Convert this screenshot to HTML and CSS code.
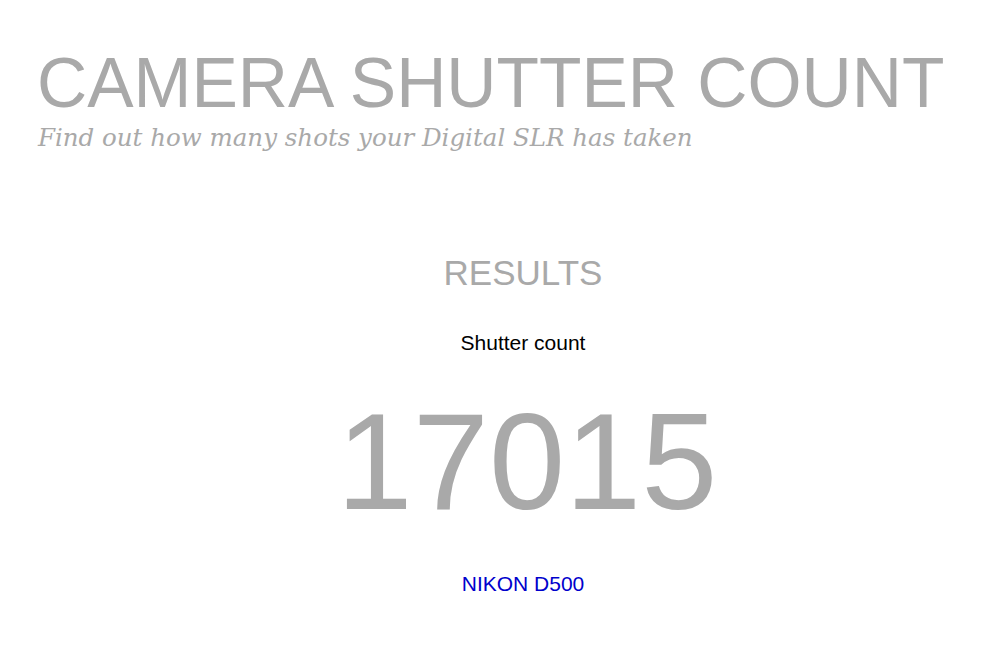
FILE: index.html
```html
<html>
	<head>
		<title>Camera Shutter Count</title>
		<link rel="stylesheet" href="styles.css">
	</head>
	<body>
		<div id='header'>
			<h1>CAMERA SHUTTER COUNT</h1>
			<p class='tagline'>Find out how many shots your Digital SLR has taken</p>
		</div>
		<div id='results'>
			<h2>RESULTS</h2>
			<p class='label'>Shutter count</p>
			<div class='count'>17015</div>
			<p class='model'>NIKON D500</p>
		</div>
	</body>
</html>
```

FILE: styles.css
```css
body{
	margin:0;
	background:#fff;
	font-family:"Liberation Sans",Arial,sans-serif;
}
#header{
	padding:49px 0 0 37px;
}
#header h1{
	margin:0;
	font-weight:normal;
	font-size:69.5px;
	line-height:1;
	color:#a9a9a9;
}
#header .tagline{
	margin:4px 0 0 1px;
	font-family:"DejaVu Serif",Georgia,serif;
	font-style:italic;
	font-size:24.5px;
	line-height:1.2;
	color:#a9a9a9;
}
#results{
	display:flex;
	flex-direction:column;
	align-items:center;
	padding:103px 0 0 46px;
}
#results h2{
	margin:0;
	font-weight:normal;
	font-size:35px;
	line-height:1;
	color:#a9a9a9;
}
#results .label{
	margin:42px 0 0;
	font-size:21px;
	line-height:1;
	color:#000;
}
#results .count{
	margin:40px 0 0 8px;
	font-size:137px;
	line-height:1;
	color:#a9a9a9;
}
#results .model{
	margin:43px 0 0;
	font-size:21px;
	line-height:1;
	color:#0000cc;
}
```
